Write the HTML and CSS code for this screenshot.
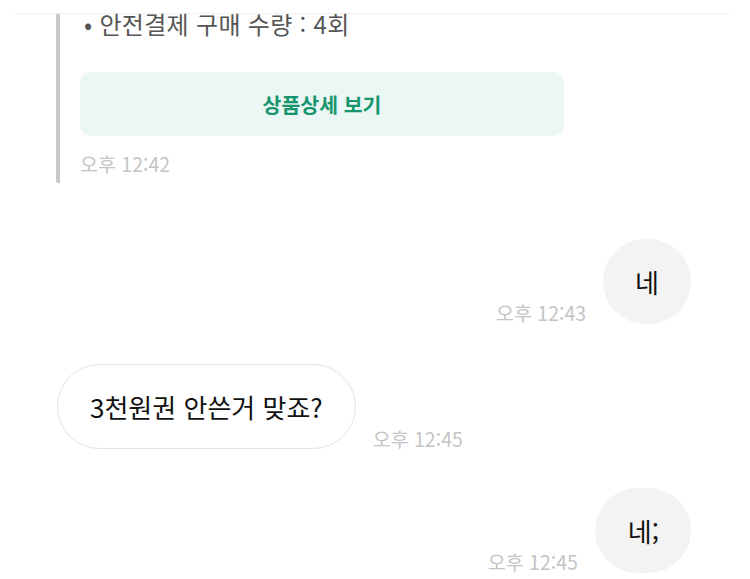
FILE: index.html
```html
<!DOCTYPE html>
<html lang="ko">
<head>
    <meta charset="UTF-8">
    <meta name="viewport" content="width=device-width, initial-scale=1.0">
    <title>chat</title>
    <link rel="stylesheet" href="styles.css">
</head>
<body>
 <div class="chat">
  <div class="top-line"></div>

  <div class="card">
   <p class="card-info">• 안전결제 구매 수량 : 4회</p>
   <button class="detail-button">상품상세 보기</button>
   <span class="time">오후 12:42</span>
  </div>

  <div class="row row-me first">
   <span class="time">오후 12:43</span>
   <div class="bubble bubble-me">네</div>
  </div>

  <div class="row row-other">
   <div class="bubble bubble-other">3천원권 안쓴거 맞죠?</div>
   <span class="time">오후 12:45</span>
  </div>

  <div class="row row-me last">
   <span class="time">오후 12:45</span>
   <div class="bubble bubble-me wide">네;</div>
  </div>
 </div>
</body>
</html>
```

FILE: styles.css
```css
body {
    margin: 0;
    background-color: #ffffff;
    font-family: "Noto Sans CJK KR", "Noto Sans", sans-serif;
    overflow: hidden;
}
.chat {
    width: 750px;
    height: 579px;
}
.top-line {
    margin: 0 20px 0 15px;
    height: 13px;
    border-bottom: 1px solid #f1f1f1;
}
.card {
    margin-left: 56px;
    width: 500px;
    border-left: 4px solid #c9c9c9;
    border-bottom-left-radius: 2px;
    padding-left: 20px;
    padding-bottom: 8px;
    display: flex;
    flex-direction: column;
    align-items: flex-start;
}
.card-info {
    margin: 0;
    padding-left: 4px;
    font-size: 24px;
    line-height: 20px;
    letter-spacing: 0.3px;
    color: #555555;
}
.detail-button {
    margin-top: 38px;
    width: 484px;
    height: 64px;
    border: none;
    border-radius: 10px;
    background-color: #eaf7f4;
    color: #17966d;
    font-family: inherit;
    font-size: 20.5px;
    font-weight: 700;
}
.card .time {
    margin-top: 17px;
}
.time {
    font-size: 19.5px;
    line-height: 22px;
    color: #c4c4c4;
    white-space: nowrap;
}
.row {
    display: flex;
    align-items: flex-end;
    gap: 17px;
}
.row-me {
    justify-content: flex-end;
    padding-right: 59px;
}
.row-other {
    margin-top: 40px;
    padding-left: 57px;
}
.first {
    margin-top: 56px;
}
.last {
    margin-top: 38px;
}
.bubble {
    height: 85px;
    padding: 0 32px;
    box-sizing: border-box;
    border-radius: 43px;
    display: flex;
    align-items: center;
    font-size: 26px;
    color: #111111;
}
.bubble-me {
    background-color: #f3f3f3;
}
.bubble-me.wide {
    padding: 0 32px 0 33px;
}
.bubble-other {
    background-color: #ffffff;
    border: 1.5px solid #e3e3e3;
    margin-bottom: 1px;
}
```
